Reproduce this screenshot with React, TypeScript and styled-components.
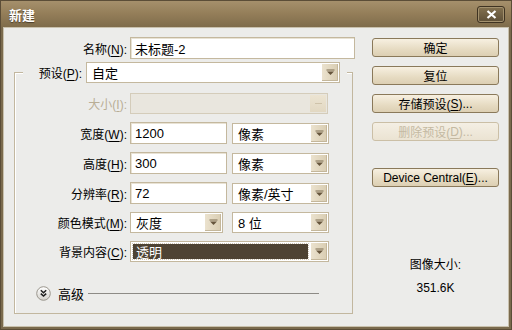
import React from "react";
import styled, { createGlobalStyle } from "styled-components";

const GlobalStyle = createGlobalStyle`
  html, body {
    margin: 0;
    padding: 0;
    background: #ececea;
  }
  body {
    font-family: "Liberation Sans", "Noto Sans CJK SC", sans-serif;
    font-size: 12px;
    color: #000;
  }
`;

const Window = styled.div`
  width: 512px;
  height: 330px;
  box-sizing: border-box;
  display: flex;
  flex-direction: column;
  background: #7a6a4d;
  border: 1px solid #5b4d37;
`;

const TitleBar = styled.div`
  height: 26px;
  display: flex;
  align-items: center;
  justify-content: space-between;
  padding: 0 6px 0 8px;
  background: linear-gradient(#a5906c, #957f5a 45%, #7f6c4b);
`;

const Title = styled.span`
  color: #fff;
  font-family: "Noto Sans CJK SC", sans-serif;
  font-weight: 700;
  font-size: 13px;
  text-shadow: 0 1px 1px #4a3c28;
`;

const CloseButton = styled.div`
  width: 28px;
  height: 17px;
  box-sizing: border-box;
  display: flex;
  align-items: center;
  justify-content: center;
  border: 1px solid #3f3322;
  border-radius: 3px;
  background: linear-gradient(#83714f, #5e4f37);
  box-shadow: inset 0 0 0 1px #a3916e;
`;

const Client = styled.div`
  flex: 1;
  display: flex;
  margin: 0 2px 2px;
  padding: 10px 0 0 11px;
  background: #ececea;
  box-shadow: inset 0 0 0 1px #c9c1ad;
`;

const LeftColumn = styled.div`
  width: 341px;
  display: flex;
  flex-direction: column;
`;

const Row = styled.div<{ $gap?: number }>`
  display: flex;
  align-items: center;
  gap: ${(p) => p.$gap ?? 3}px;
`;

const Label = styled.span<{ $width: number; $disabled?: boolean }>`
  width: ${(p) => p.$width}px;
  text-align: right;
  white-space: nowrap;
  color: ${(p) => (p.$disabled ? "#b9ae96" : "#000")};
  u {
    text-decoration: underline;
    text-underline-offset: 2px;
  }
`;

const TextInput = styled.div<{ $width: number }>`
  width: ${(p) => p.$width}px;
  height: 22px;
  box-sizing: border-box;
  display: flex;
  align-items: center;
  padding-left: 4px;
  background: #fff;
  border: 1px solid #c4b89e;
  box-shadow: inset 1px 1px 0 #e8e2d4;
  font-size: 13px;
`;

const Group = styled.div`
  width: 339px;
  height: 242px;
  box-sizing: border-box;
  margin-top: 13px;
  border: 1px solid #c2b79f;
  box-shadow: inset 1px 1px 0 #fff;
  display: flex;
  flex-direction: column;
`;

const GroupHeader = styled.div`
  width: 324px;
  margin: -11px 0 0 8px;
  padding-right: 7px;
  box-sizing: border-box;
  display: flex;
  align-items: center;
  gap: 4px;
  background: #ececea;
`;

const Fields = styled.div`
  display: flex;
  flex-direction: column;
  gap: 8px;
  margin-top: 10px;
`;

const SelectBox = styled.div<{ $width: number; $disabled?: boolean }>`
  width: ${(p) => p.$width}px;
  height: 21px;
  box-sizing: border-box;
  display: flex;
  align-items: stretch;
  background: ${(p) => (p.$disabled ? "#e9e6de" : "#fff")};
  border: 1px solid ${(p) => (p.$disabled ? "#d4ccba" : "#c4b89e")};
  font-size: 13px;
`;

const SelectValue = styled.div<{ $selected?: boolean }>`
  flex: 1;
  display: flex;
  align-items: center;
  padding-left: ${(p) => (p.$selected ? 3 : 5)}px;
  margin: ${(p) => (p.$selected ? "2px" : "0")};
  background: ${(p) => (p.$selected ? "#4e4333" : "transparent")};
  color: ${(p) => (p.$selected ? "#fff" : "#000")};
  outline: ${(p) => (p.$selected ? "1px dotted #cfc6b4" : "none")};
  white-space: nowrap;
`;

const ArrowButton = styled.div<{ $disabled?: boolean }>`
  width: 16px;
  margin: 1px;
  display: flex;
  align-items: center;
  justify-content: center;
  background: ${(p) =>
    p.$disabled
      ? "linear-gradient(#ece4d2, #e2d8c2)"
      : "linear-gradient(90deg, #ebe2ce, #d9cdb2)"};
  box-shadow: ${(p) => (p.$disabled ? "none" : "inset -1px -1px 0 #c4b79b")};
`;

const Advanced = styled.div`
  display: flex;
  align-items: center;
  margin: 22px 33px 0 21px;
  gap: 7px;
`;

const AdvancedText = styled.span`
  font-size: 13px;
`;

const Rule = styled.div`
  flex: 1;
  height: 1px;
  margin-left: -3px;
  background: #8d8b86;
`;

const RightColumn = styled.div`
  width: 127px;
  margin: 1px 0 0 17px;
  display: flex;
  flex-direction: column;
  gap: 9px;
`;

const Button = styled.div<{ $disabled?: boolean; $spaced?: boolean }>`
  height: 19px;
  box-sizing: border-box;
  display: flex;
  align-items: center;
  justify-content: center;
  margin-top: ${(p) => (p.$spaced ? 18 : 0)}px;
  border: 1px solid ${(p) => (p.$disabled ? "#cbbfa6" : "#8a795a")};
  border-radius: 3px;
  background: ${(p) =>
    p.$disabled
      ? "linear-gradient(#f4efe4, #ebe3d2)"
      : "linear-gradient(#f7f0e1, #e6dbc2 60%, #dccfb3)"};
  color: ${(p) => (p.$disabled ? "#c4b9a2" : "#000")};
  font-size: 12px;
  white-space: nowrap;
  u {
    text-decoration: underline;
    text-underline-offset: 2px;
  }
`;

const SizeInfo = styled.div`
  margin-top: 59px;
  display: flex;
  flex-direction: column;
  align-items: center;
  gap: 9px;
  font-size: 12px;
`;

const DownArrow = ({ disabled }: { disabled?: boolean }) =>
  disabled ? (
    <svg width="9" height="5" viewBox="0 0 9 5">
      <path d="M1 2.5h7" stroke="#cfc3aa" strokeWidth="1" />
    </svg>
  ) : (
    <svg width="9" height="7" viewBox="0 0 9 7">
      <path d="M0.5 1h8" stroke="#7a6a4e" strokeWidth="1" />
      <path d="M1 2.5h7L4.5 6z" fill="#66553c" />
    </svg>
  );

type SelectProps = {
  value?: string;
  width: number;
  disabled?: boolean;
  selected?: boolean;
};

const Select = ({ value, width, disabled, selected }: SelectProps) => (
  <SelectBox $width={width} $disabled={disabled}>
    <SelectValue $selected={selected}>{value}</SelectValue>
    <ArrowButton $disabled={disabled}>
      <DownArrow disabled={disabled} />
    </ArrowButton>
  </SelectBox>
);

const ExpandIcon = () => (
  <svg width="15" height="15" viewBox="0 0 15 15">
    <defs>
      <linearGradient id="exp" x1="0" y1="0" x2="0" y2="1">
        <stop offset="0" stopColor="#ffffff" />
        <stop offset="1" stopColor="#d4d2cc" />
      </linearGradient>
    </defs>
    <circle cx="7.5" cy="7.5" r="6.8" fill="url(#exp)" stroke="#9a968d" />
    <path
      d="M4.8 4.3l2.7 2.5 2.7-2.5M4.8 7.6l2.7 2.5 2.7-2.5"
      fill="none"
      stroke="#1e1e1e"
      strokeWidth="1.5"
    />
  </svg>
);

const CloseIcon = () => (
  <svg width="11" height="9" viewBox="0 0 11 9">
    <path d="M1.5 1l8 7M9.5 1l-8 7" stroke="#fff" strokeWidth="2.2" />
  </svg>
);

const fields = [
  { label: "宽度", key: "W", value: "1200", unit: "像素" },
  { label: "高度", key: "H", value: "300", unit: "像素" },
  { label: "分辨率", key: "R", value: "72", unit: "像素/英寸" },
];

const App = () => {
  return (
    <>
      <GlobalStyle />
      <Window>
        <TitleBar>
          <Title>新建</Title>
          <CloseButton>
            <CloseIcon />
          </CloseButton>
        </TitleBar>
        <Client>
          <LeftColumn>
            <Row>
              <Label $width={113}>
                名称(<u>N</u>):
              </Label>
              <TextInput $width={225}>未标题-2</TextInput>
            </Row>
            <Group>
              <GroupHeader>
                <Label $width={59}>
                  预设(<u>P</u>):
                </Label>
                <Select value="自定" width={254} />
              </GroupHeader>
              <Fields>
                <Row>
                  <Label $width={112} $disabled>
                    大小(<u>I</u>):
                  </Label>
                  <Select width={198} disabled />
                </Row>
                {fields.map((f) => (
                  <Row key={f.key}>
                    <Label $width={112}>
                      {f.label}(<u>{f.key}</u>):
                    </Label>
                    <TextInput $width={97}>{f.value}</TextInput>
                    <Row $gap={0} style={{ marginLeft: 2 }}>
                      <Select value={f.unit} width={97} />
                    </Row>
                  </Row>
                ))}
                <Row>
                  <Label $width={112}>
                    颜色模式(<u>M</u>):
                  </Label>
                  <Select value="灰度" width={93} />
                  <Row $gap={0} style={{ marginLeft: 6 }}>
                    <Select value="8 位" width={97} />
                  </Row>
                </Row>
                <Row>
                  <Label $width={112}>
                    背景内容(<u>C</u>):
                  </Label>
                  <Select value="透明" width={199} selected />
                </Row>
              </Fields>
              <Advanced>
                <ExpandIcon />
                <AdvancedText>高级</AdvancedText>
                <Rule />
              </Advanced>
            </Group>
          </LeftColumn>
          <RightColumn>
            <Button>确定</Button>
            <Button>复位</Button>
            <Button>
              存储预设(<u>S</u>)...
            </Button>
            <Button $disabled>
              删除预设(<u>D</u>)...
            </Button>
            <Button $spaced>
              Device Central(<u>E</u>)...
            </Button>
            <SizeInfo>
              <span>图像大小:</span>
              <span>351.6K</span>
            </SizeInfo>
          </RightColumn>
        </Client>
      </Window>
    </>
  );
};

export default App;
